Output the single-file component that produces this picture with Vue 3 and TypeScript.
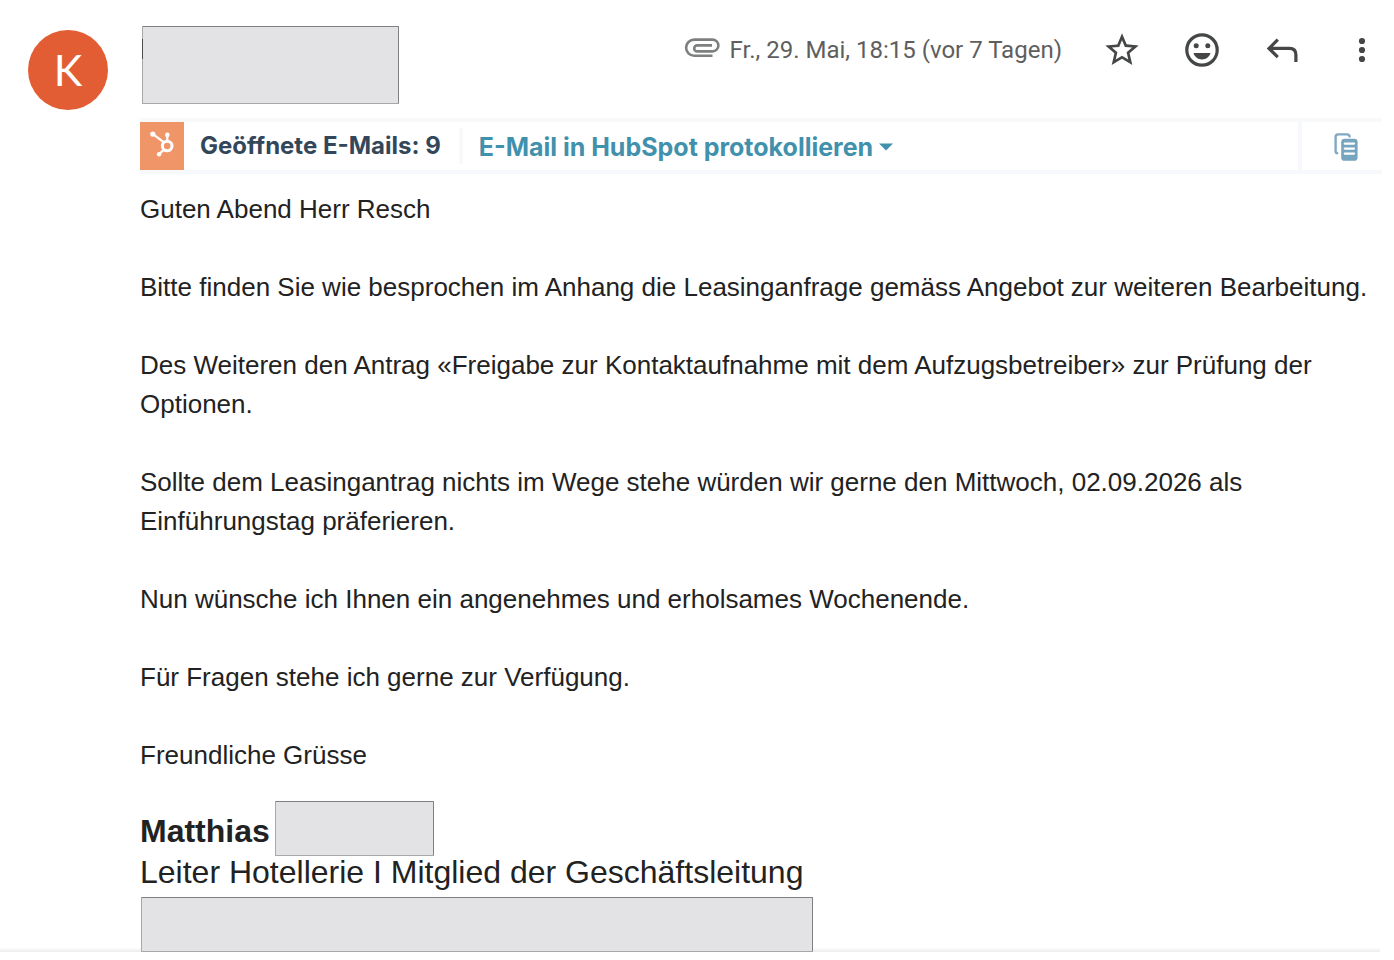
<script setup lang="ts">
const paragraphs: string[] = [
  'Guten Abend Herr Resch',
  'Bitte finden Sie wie besprochen im Anhang die Leasinganfrage gemäss Angebot zur weiteren Bearbeitung.',
  'Des Weiteren den Antrag «Freigabe zur Kontaktaufnahme mit dem Aufzugsbetreiber» zur Prüfung der Optionen.',
  'Sollte dem Leasingantrag nichts im Wege stehe würden wir gerne den Mittwoch, 02.09.2026 als Einführungstag präferieren.',
  'Nun wünsche ich Ihnen ein angenehmes und erholsames Wochenende.',
  'Für Fragen stehe ich gerne zur Verfügung.',
  'Freundliche Grüsse',
]
</script>

<template>
  <article class="message">
    <div class="avatar">K</div>
    <div class="content">
      <header class="head">
        <div class="redacted sender"></div>
        <div class="meta">
          <svg class="clip" viewBox="0 0 36 20" fill="none" stroke="#7d807e" stroke-width="2.6">
            <path d="M28.5 17.8H10.2A8.1 8.1 0 0 1 10.2 1.6H28.5A5.9 5.9 0 0 1 28.5 13.4H13.2A2.9 2.9 0 0 1 13.2 7.4H28" />
          </svg>
          <time datetime="2026-05-29T18:15">Fr., 29. Mai, 18:15 (vor 7 Tagen)</time>
        </div>
        <div class="actions">
          <button type="button" aria-label="Markieren">
            <svg viewBox="0 0 24 24" fill="#444746">
              <path d="M22 9.24l-7.19-.62L12 2 9.19 8.63 2 9.24l5.46 4.73L5.82 21 12 17.27 18.18 21l-1.63-7.03L22 9.24zM12 15.4l-3.76 2.27 1-4.28-3.32-2.88 4.38-.38L12 6.1l1.71 4.04 4.38.38-3.32 2.88 1 4.28L12 15.4z" />
            </svg>
          </button>
          <button type="button" aria-label="Reagieren">
            <svg viewBox="0 0 40 40" fill="#444746">
              <circle cx="20" cy="20" r="15.2" fill="none" stroke="#444746" stroke-width="3.2" />
              <circle cx="14.2" cy="15.8" r="2.5" />
              <circle cx="25.8" cy="15.8" r="2.5" />
              <path d="M11.5 23H28.5C27.3 26.9 24 29.4 20 29.4S12.7 26.9 11.5 23Z" />
            </svg>
          </button>
          <button type="button" aria-label="Antworten">
            <svg viewBox="0 0 40 40" fill="none" stroke="#444746" stroke-width="3.2">
              <path d="M15.8 9.6L7 18.4L15.8 27.2M7 18.4H27.5Q33.9 18.4 33.9 24.8V32" />
            </svg>
          </button>
          <button type="button" aria-label="Mehr">
            <svg viewBox="0 0 40 40" fill="#444746">
              <circle cx="20" cy="11" r="3.1" />
              <circle cx="20" cy="20" r="3.1" />
              <circle cx="20" cy="29" r="3.1" />
            </svg>
          </button>
        </div>
      </header>

      <div class="crm">
        <div class="logo">
          <svg viewBox="0 0 44 48" fill="#fff" stroke="#fff">
            <circle cx="27.2" cy="24" r="4.8" fill="none" stroke-width="3" />
            <path d="M13 12.2L23.6 20.2M27.3 13V19M23.8 27.6L19.4 32" fill="none" stroke-width="2.2" />
            <g stroke="none">
              <circle cx="12.8" cy="12.1" r="2.6" />
              <circle cx="27.3" cy="12.9" r="2.3" />
              <circle cx="19.1" cy="32.2" r="2.2" />
            </g>
          </svg>
        </div>
        <span class="opened">Geöffnete E-Mails: 9</span>
        <button type="button" class="log">
          E-Mail in HubSpot protokollieren
          <svg class="caret" viewBox="0 0 14 8" fill="#4191ac"><path d="M0 0.5H14L7 7.5Z" /></svg>
        </button>
        <button type="button" class="copy" aria-label="Kopieren">
          <svg viewBox="0 0 24 28">
            <path d="M3.2 20.2Q1.6 20 1.6 18V4Q1.6 1.4 4.2 1.4H13Q15.2 1.4 15.6 3.4" fill="none" stroke="#7fa9c0" stroke-width="2.4" stroke-linecap="round" />
            <rect x="7.2" y="5.8" width="16.4" height="22" rx="3.4" fill="#76a6bf" />
            <path d="M10.8 10.6H20M10.8 15.6H20M10.8 20.6H20" stroke="#fff" stroke-width="2.2" stroke-linecap="round" />
          </svg>
        </button>
      </div>

      <div class="body">
        <p v-for="text in paragraphs" :key="text">{{ text }}</p>
      </div>

      <footer class="signature">
        <div class="name">
          <strong>Matthias</strong>
          <div class="redacted surname"></div>
        </div>
        <div class="role">Leiter Hotellerie I Mitglied der Geschäftsleitung</div>
        <div class="redacted company"></div>
      </footer>
    </div>
  </article>
</template>

<style>
body {
  background: #fff;
}
</style>

<style scoped>
.message {
  display: flex;
  gap: 32px;
  padding: 26px 12px 0 28px;
  color: #222;
  font-family: 'Liberation Sans', Arial, sans-serif;
  background: linear-gradient(#fcfcfc, #ececec) left bottom / calc(100% - 14px) 4px no-repeat;
}
.avatar {
  flex: none;
  width: 80px;
  height: 80px;
  margin-top: 4px;
  border-radius: 50%;
  background: #e25d33;
  color: #fff;
  font: 43px/80px Lato, sans-serif;
  text-align: center;
}
.content {
  flex: 1;
  min-width: 0;
}
.head {
  display: flex;
  align-items: flex-start;
}
.redacted {
  box-sizing: border-box;
  background: #e3e3e5;
  border: 1px solid #808082;
  border-left-color: #a8a8aa;
  border-bottom-color: #a8a8aa;
  border-radius: 1px;
}
.sender {
  position: relative;
  width: 257px;
  height: 78px;
  margin-left: 2px;
}
.sender::before {
  content: '';
  position: absolute;
  top: 12px;
  left: -1px;
  width: 1px;
  height: 20px;
  background: #4c4c4c;
}
.meta {
  display: flex;
  align-items: center;
  gap: 10px;
  height: 48px;
  margin-left: auto;
  color: #5e5e5e;
  font: 24px/32px Roboto, sans-serif;
  white-space: nowrap;
}
.clip {
  width: 36px;
  height: 20px;
  margin-bottom: 4px;
}
.actions {
  display: flex;
  gap: 40px;
  margin: 4px 0 0 40px;
}
button {
  padding: 0;
  border: 0;
  background: none;
  cursor: pointer;
}
.actions button {
  width: 40px;
  height: 40px;
}
svg {
  display: block;
}
.actions svg {
  width: 40px;
  height: 40px;
}
.crm {
  display: flex;
  align-items: center;
  height: 48px;
  margin-top: 14px;
  border-top: 4px solid #f8f9fa;
  border-bottom: 4px solid #f6f8fb;
  color: #33475b;
  font: 700 24px/36px Inter, sans-serif;
  white-space: nowrap;
}
.logo {
  width: 44px;
  height: 48px;
  background: #f09567;
}
.opened {
  padding: 0 18px 0 16px;
  border-right: 4px solid #f8f9fa;
}
.log {
  display: flex;
  align-items: center;
  gap: 6px;
  padding: 2px 16px 0 16px;
  color: #4191ac;
  font: inherit;
  font-size: 25px;
}
.caret {
  width: 14px;
  height: 8px;
}
.copy {
  display: flex;
  align-items: center;
  height: 48px;
  margin-left: auto;
  padding: 2px 24px 0 32px;
  border-left: 4px solid #f6f8fb;
}
.copy svg {
  width: 24px;
  height: 28px;
}
.body {
  display: flex;
  flex-direction: column;
  gap: 39px;
  padding-top: 16px;
  font-size: 26px;
  line-height: 39px;
}
p {
  margin: 0;
}
.signature {
  margin-top: 26px;
  font-size: 32px;
  line-height: 32px;
}
.name {
  display: flex;
  align-items: center;
  gap: 5px;
}
.name strong {
  padding-top: 4px;
}
.surname {
  width: 159px;
  height: 55px;
}
.company {
  width: 672px;
  height: 55px;
  margin: 9px 0 0 1px;
}
</style>
